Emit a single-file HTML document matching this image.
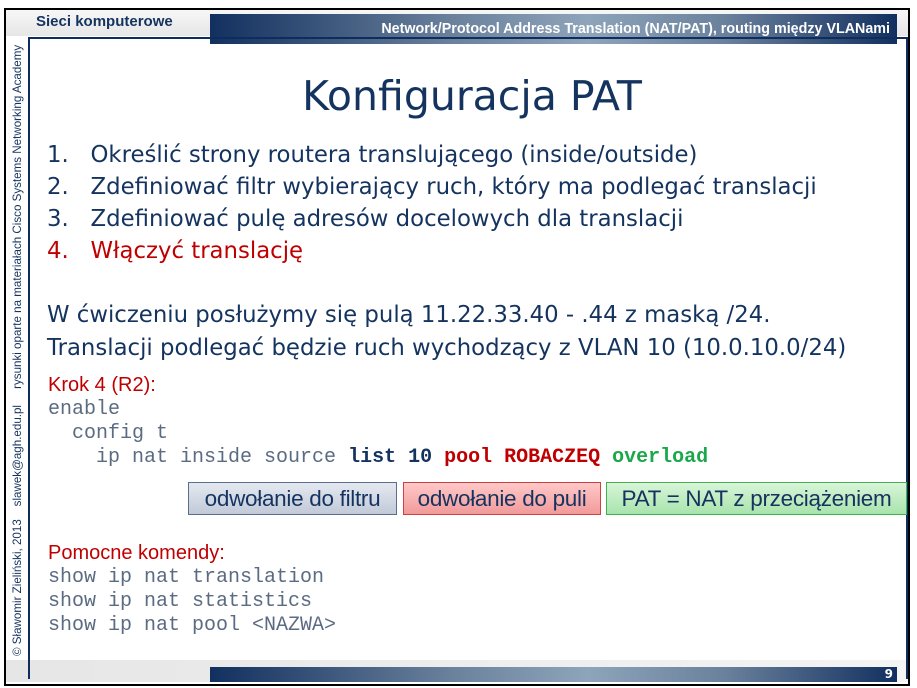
<!DOCTYPE html>
<html><head><meta charset="utf-8"><style>
body{margin:0;width:917px;height:688px;background:#fff;position:relative;overflow:hidden;font-family:"DejaVu Sans",sans-serif}
.a{position:absolute;white-space:nowrap}
.frame{position:absolute;left:4px;top:8px;width:902px;height:674px;border:2px solid #000}
.band{position:absolute;left:6px;top:10px;width:902px;height:26px;background:linear-gradient(#f7f7f7,#e6e6e6)}
.bbar{position:absolute;left:210px;width:687px;background:linear-gradient(90deg,#12305f,#6a819c 35%,#8ea4ba 55%,#6a819c 75%,#12305f)}
.t{color:#14335f}
.mono{font-family:"Liberation Mono",monospace;font-size:20px;color:#5b6b82}
.box{position:absolute;top:482px;height:31px;border:1px solid;font-family:"Liberation Sans",sans-serif;font-size:22.5px;color:#14335f;line-height:31px;text-align:center;letter-spacing:-0.3px}
</style></head><body>
<div class="band"></div>
<div class="a" style="left:6px;top:660px;width:902px;height:22px;background:linear-gradient(90deg,#e6e6e6,#f4f4f4)"></div>
<div class="bbar" style="top:14px;height:30px"></div>
<div class="bbar" style="top:667px;height:15px"></div>
<div class="a" style="left:28px;top:37px;width:876px;height:640px;border:2px solid #0e2d5e;border-bottom:none"></div>
<div class="frame"></div>
<div class="a" style="left:36px;top:13px;font-family:'Liberation Sans',sans-serif;font-weight:bold;font-size:15px;color:#14335f">Sieci komputerowe</div>
<div class="a" style="right:27px;top:21px;font-family:'Liberation Sans',sans-serif;font-weight:bold;font-size:14.3px;color:#fff">Network/Protocol Address Translation (NAT/PAT), routing między VLANami</div>
<div class="a" style="right:24px;top:667px;font-weight:bold;font-size:12px;color:#fff">9</div>
<div class="a" style="left:11px;top:656px;transform:rotate(-90deg);transform-origin:0 0;font-size:11.6px;color:#14335f;font-family:'Liberation Sans',sans-serif">© Sławomir Zieliński, 2013 &nbsp;&nbsp; slawek@agh.edu.pl &nbsp;&nbsp;&nbsp; rysunki oparte na materiałach Cisco Systems Networking Academy</div>
<div class="a t" style="left:0;width:944px;text-align:center;top:72px;font-size:41px">Konfiguracja PAT</div>
<div class="a t" style="left:47px;top:139px;font-size:22.8px;line-height:32px">1.&nbsp;&nbsp;&nbsp;Określić strony routera translującego (inside/outside)<br>2.&nbsp;&nbsp;&nbsp;Zdefiniować filtr wybierający ruch, który ma podlegać translacji<br>3.&nbsp;&nbsp;&nbsp;Zdefiniować pulę adresów docelowych dla translacji<br><span style="color:#c00000">4.&nbsp;&nbsp;&nbsp;Włączyć translację</span></div>
<div class="a t" style="left:47px;top:299px;font-size:22.8px;line-height:33px">W ćwiczeniu posłużymy się pulą 11.22.33.40 - .44 z maską /24.<br>Translacji podlegać będzie ruch wychodzący z VLAN 10 (10.0.10.0/24)</div>
<div class="a" style="left:48px;top:374px;font-family:'Liberation Sans',sans-serif;font-size:20px;color:#c00000">Krok 4 (R2):</div>
<div class="a mono" style="left:48px;top:398px;line-height:24px">enable<br>&nbsp;&nbsp;config t<br>&nbsp;&nbsp;&nbsp;&nbsp;ip nat inside source <b style="color:#14335f">list 10</b> <b style="color:#c00000">pool ROBACZEQ</b> <b style="color:#1aa84a">overload</b></div>
<div class="box" style="left:188px;width:207px;background:linear-gradient(#e4e8f0,#c2cad8);border-color:#5a6e90">odwołanie do filtru</div>
<div class="box" style="left:403px;width:196px;background:linear-gradient(#ffc8c8,#f29a9a);border-color:#d04040">odwołanie do puli</div>
<div class="box" style="left:606px;width:299px;background:linear-gradient(#d8f5d8,#a8e4ac);border-color:#40b050">PAT = NAT z przeciążeniem</div>
<div class="a" style="left:48px;top:542px;font-family:'Liberation Sans',sans-serif;font-size:20px;color:#c00000">Pomocne komendy:</div>
<div class="a mono" style="left:48px;top:566px;line-height:24px">show ip nat translation<br>show ip nat statistics<br>show ip nat pool &lt;NAZWA&gt;</div>
</body></html>
